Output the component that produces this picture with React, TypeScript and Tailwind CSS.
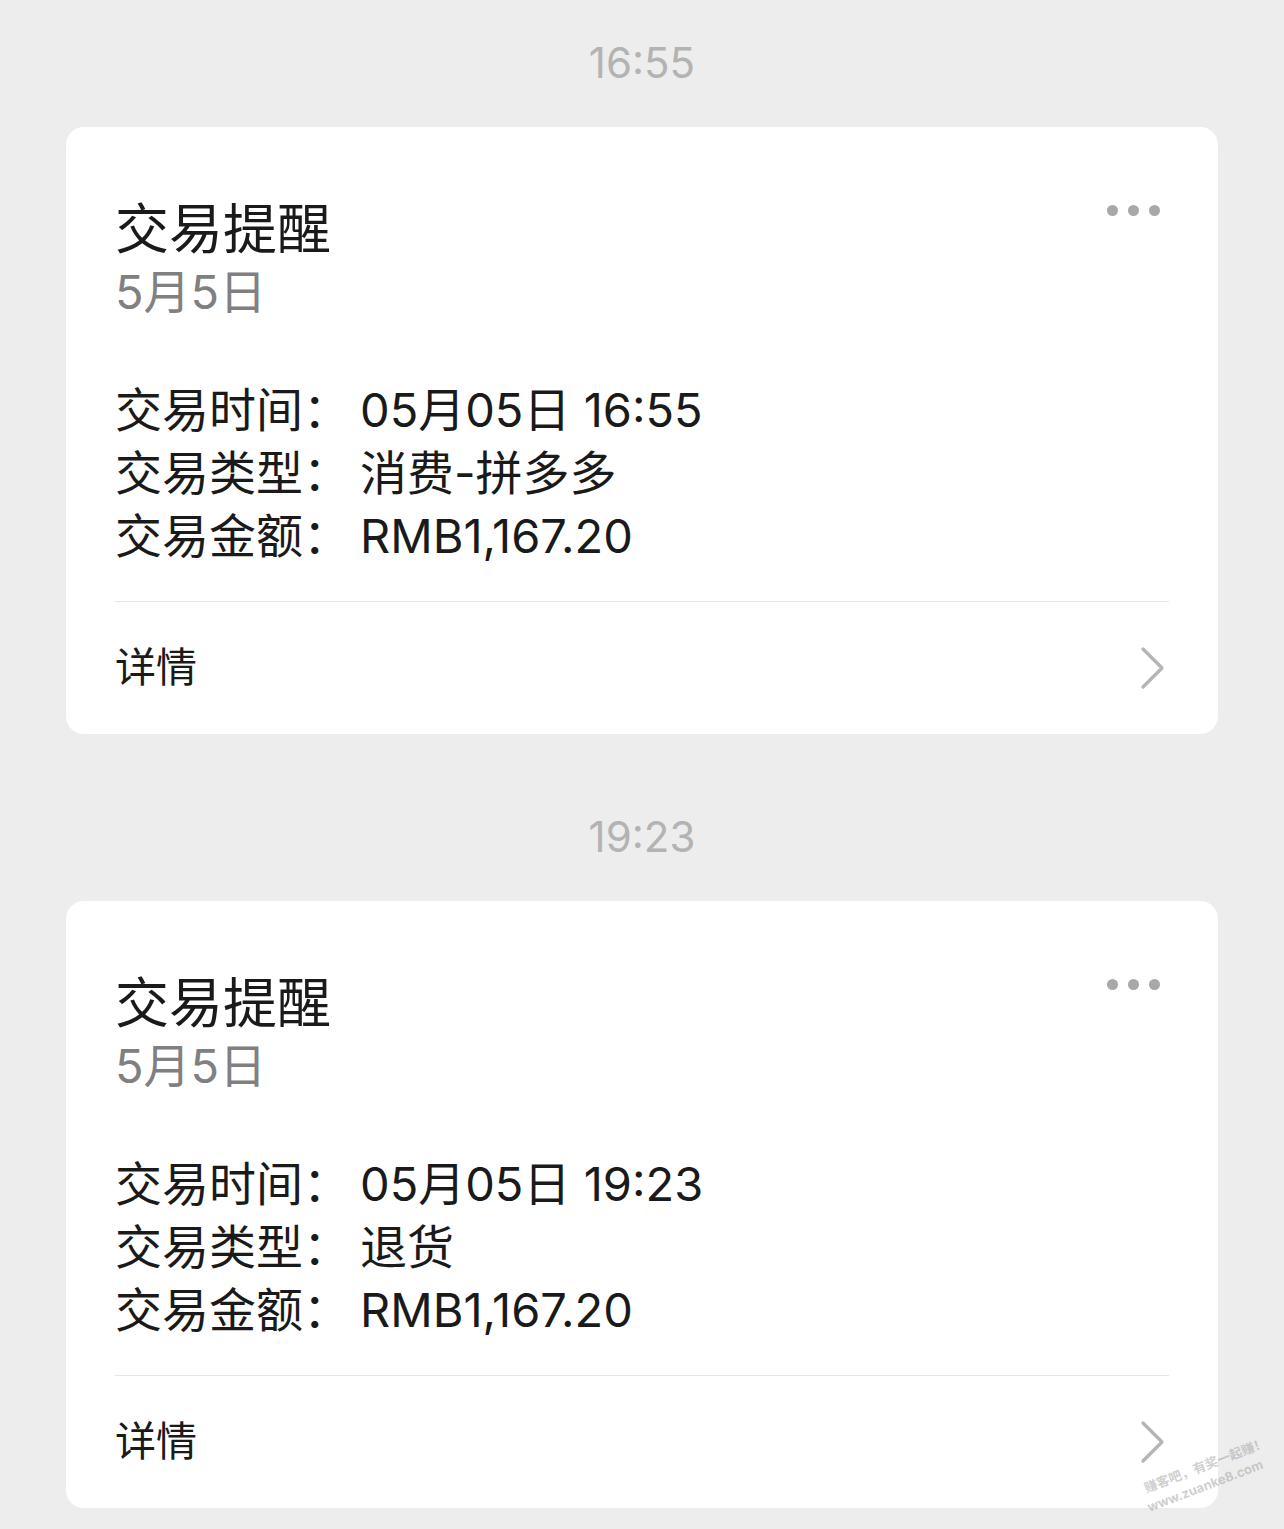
const messages = [
  {
    time: "16:55",
    rows: [
      { label: "交易时间", value: "05月05日 16:55" },
      { label: "交易类型", value: "消费-拼多多" },
      { label: "交易金额", value: "RMB1,167.20" },
    ],
  },
  {
    time: "19:23",
    rows: [
      { label: "交易时间", value: "05月05日 19:23" },
      { label: "交易类型", value: "退货" },
      { label: "交易金额", value: "RMB1,167.20" },
    ],
  },
];

function MoreDots() {
  return (
    <div className="absolute right-[58px] top-[78px] flex items-center gap-[10px]">
      <span className="block h-[11px] w-[11px] rounded-full bg-[#a8a8a8]" />
      <span className="block h-[11px] w-[11px] rounded-full bg-[#a8a8a8]" />
      <span className="block h-[11px] w-[11px] rounded-full bg-[#a8a8a8]" />
    </div>
  );
}

function Chevron() {
  return (
    <svg width="28" height="44" viewBox="0 0 28 44" fill="none">
      <path
        d="M4 3 L23 22 L4 41"
        stroke="#b4b4b4"
        strokeWidth="3.2"
        strokeLinecap="round"
        strokeLinejoin="round"
      />
    </svg>
  );
}

function NoticeCard({ rows }: { rows: (typeof messages)[0]["rows"] }) {
  return (
    <div className="relative mx-[66px] rounded-[18px] bg-white px-[49px] pt-[71px]">
      <MoreDots />
      {/* header */}
      <div className="text-[54px] leading-[63px] text-[#1a1a1a]">交易提醒</div>
      <div className="text-[47px] leading-[62px] text-[#808080]">5月5日</div>

      {/* body */}
      <div className="mt-[56px] flex flex-col">
        {rows.map((row) => (
          <div key={row.label} className="flex h-[63px] items-center text-[47px] text-[#1a1a1a]">
            <span className="w-[245px] shrink-0">{row.label}：</span>
            <span>{row.value}</span>
          </div>
        ))}
      </div>

      <div className="mt-[33px] h-px bg-[#e6e6e6]" />

      {/* footer */}
      <div className="flex h-[132px] items-center justify-between">
        <span className="text-[41px] text-[#1a1a1a]">详情</span>
        <span className="mr-[2px] flex items-center">
          <Chevron />
        </span>
      </div>
    </div>
  );
}

export default function App() {
  return (
    <div
      className="relative min-h-screen overflow-hidden bg-[#ededed] pt-[32px] pb-[22px]"
      style={{ fontFamily: 'Inter, "Noto Sans CJK SC", "Noto Sans", sans-serif' }}
    >
      <div className="flex flex-col gap-[72px]">
        {messages.map((m) => (
          <section key={m.time} className="flex flex-col">
            <div className="flex h-[60px] items-center justify-center text-[42px] text-[#b3b3b3]">
              {m.time}
            </div>
            <div className="mt-[35px]">
              <NoticeCard rows={m.rows} />
            </div>
          </section>
        ))}
      </div>

      {/* site watermark */}
      <div className="pointer-events-none absolute left-[1140px] top-[1456px] -rotate-[21deg] text-[13px] font-bold leading-[19px] text-[#a0a0a0]/50">
        <div className="pl-[4px]">赚客吧，有奖一起赚！</div>
        <div>www.zuanke8.com</div>
      </div>
    </div>
  );
}
